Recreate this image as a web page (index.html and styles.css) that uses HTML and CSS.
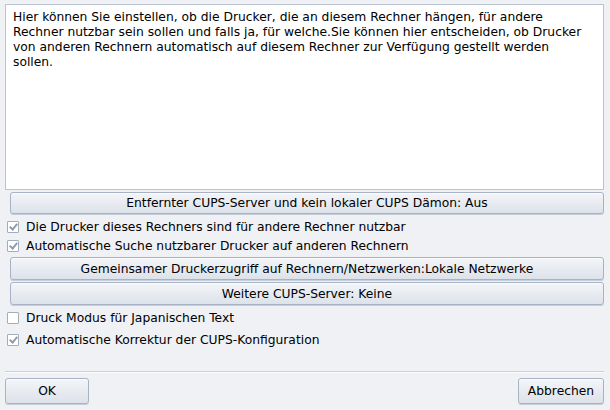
FILE: index.html
```html
<!DOCTYPE html>
<html lang="de">
<head>
<meta charset="utf-8">
<title>Drucker</title>
<link rel="stylesheet" href="styles.css">
</head>
<body>
<div class="dialog">
  <div class="info">Hier können Sie einstellen, ob die Drucker, die an diesem Rechner hängen, für andere Rechner nutzbar sein sollen und falls ja, für welche.Sie können hier entscheiden, ob Drucker von anderen Rechnern automatisch auf diesem Rechner zur Verfügung gestellt werden sollen.</div>
  <div class="indent"><button class="btn wide b1">Entfernter CUPS-Server und kein lokaler CUPS Dämon: Aus</button></div>
  <label class="check c1"><span class="box on"></span>Die Drucker dieses Rechners sind für andere Rechner nutzbar</label>
  <label class="check c2"><span class="box on"></span>Automatische Suche nutzbarer Drucker auf anderen Rechnern</label>
  <div class="indent"><button class="btn wide b2">Gemeinsamer Druckerzugriff auf Rechnern/Netzwerken:Lokale Netzwerke</button></div>
  <div class="indent"><button class="btn wide b3">Weitere CUPS-Server: Keine</button></div>
  <label class="check c3"><span class="box"></span>Druck Modus für Japanischen Text</label>
  <label class="check c4"><span class="box on"></span>Automatische Korrektur der CUPS-Konfiguration</label>
  <div class="spacer"></div>
  <div class="sep"></div>
  <div class="actions">
    <button class="btn ok">OK</button>
    <button class="btn cancel">Abbrechen</button>
  </div>
</div>
</body>
</html>
```
FILE: styles.css
```css
html, body {
  margin: 0;
  padding: 0;
  background: #eff1f5;
}
body {
  font-family: "DejaVu Sans", sans-serif;
  font-size: 12.3px;
  color: #000;
}
.dialog {
  width: 610px;
  height: 410px;
  box-sizing: border-box;
  padding: 4px 6px 6px 5px;
  display: flex;
  flex-direction: column;
}
.info {
  height: 186px;
  box-sizing: border-box;
  background: #fff;
  border: 1px solid #b9c3d1;
  padding: 5px 12px 5px 7px;
  line-height: 15px;
}
.indent {
  padding-left: 5px;
}
.btn {
  font-family: "DejaVu Sans", sans-serif;
  font-size: 12.3px;
  color: #000;
  border: 1px solid #a7b3c5;
  border-radius: 3px;
  background: linear-gradient(#f3f5f8, #dde2ea);
  box-shadow: inset 0 1px 0 #fbfcfd, 0 1px 0 #c6ceda;
  padding: 0;
  margin: 0;
}
.wide {
  width: 100%;
  height: 22px;
  display: block;
}
.b1 { margin-top: 2px; }
.b2 { margin-top: 2px; height: 23px; }
.b3 { margin-top: 2px; height: 23px; }
.check {
  display: flex;
  align-items: center;
  gap: 7px;
  height: 18px;
  padding-left: 2px;
}
.c1 { margin-top: 4px; }
.c2 { margin-top: 1px; }
.c3 { margin-top: 4px; }
.c4 { margin-top: 4px; }
.box {
  width: 10px;
  height: 10px;
  border: 1px solid #a4adba;
  background: #fff;
  border-radius: 1px;
  position: relative;
  flex: none;
}
.box.on::after {
  content: "";
  position: absolute;
  left: 3px;
  top: 0px;
  width: 3px;
  height: 6px;
  border-right: 2px solid #8e9cb2;
  border-bottom: 2px solid #8e9cb2;
  transform: rotate(40deg);
}
.spacer { flex: 1; }
.sep {
  height: 1px;
  background: #c9d0da;
  border-bottom: 1px solid #fafbfc;
  margin-bottom: 5px;
}
.actions {
  display: flex;
  justify-content: space-between;
}
.ok {
  width: 84px;
  height: 26px;
}
.cancel {
  width: 86px;
  height: 26px;
}
```
